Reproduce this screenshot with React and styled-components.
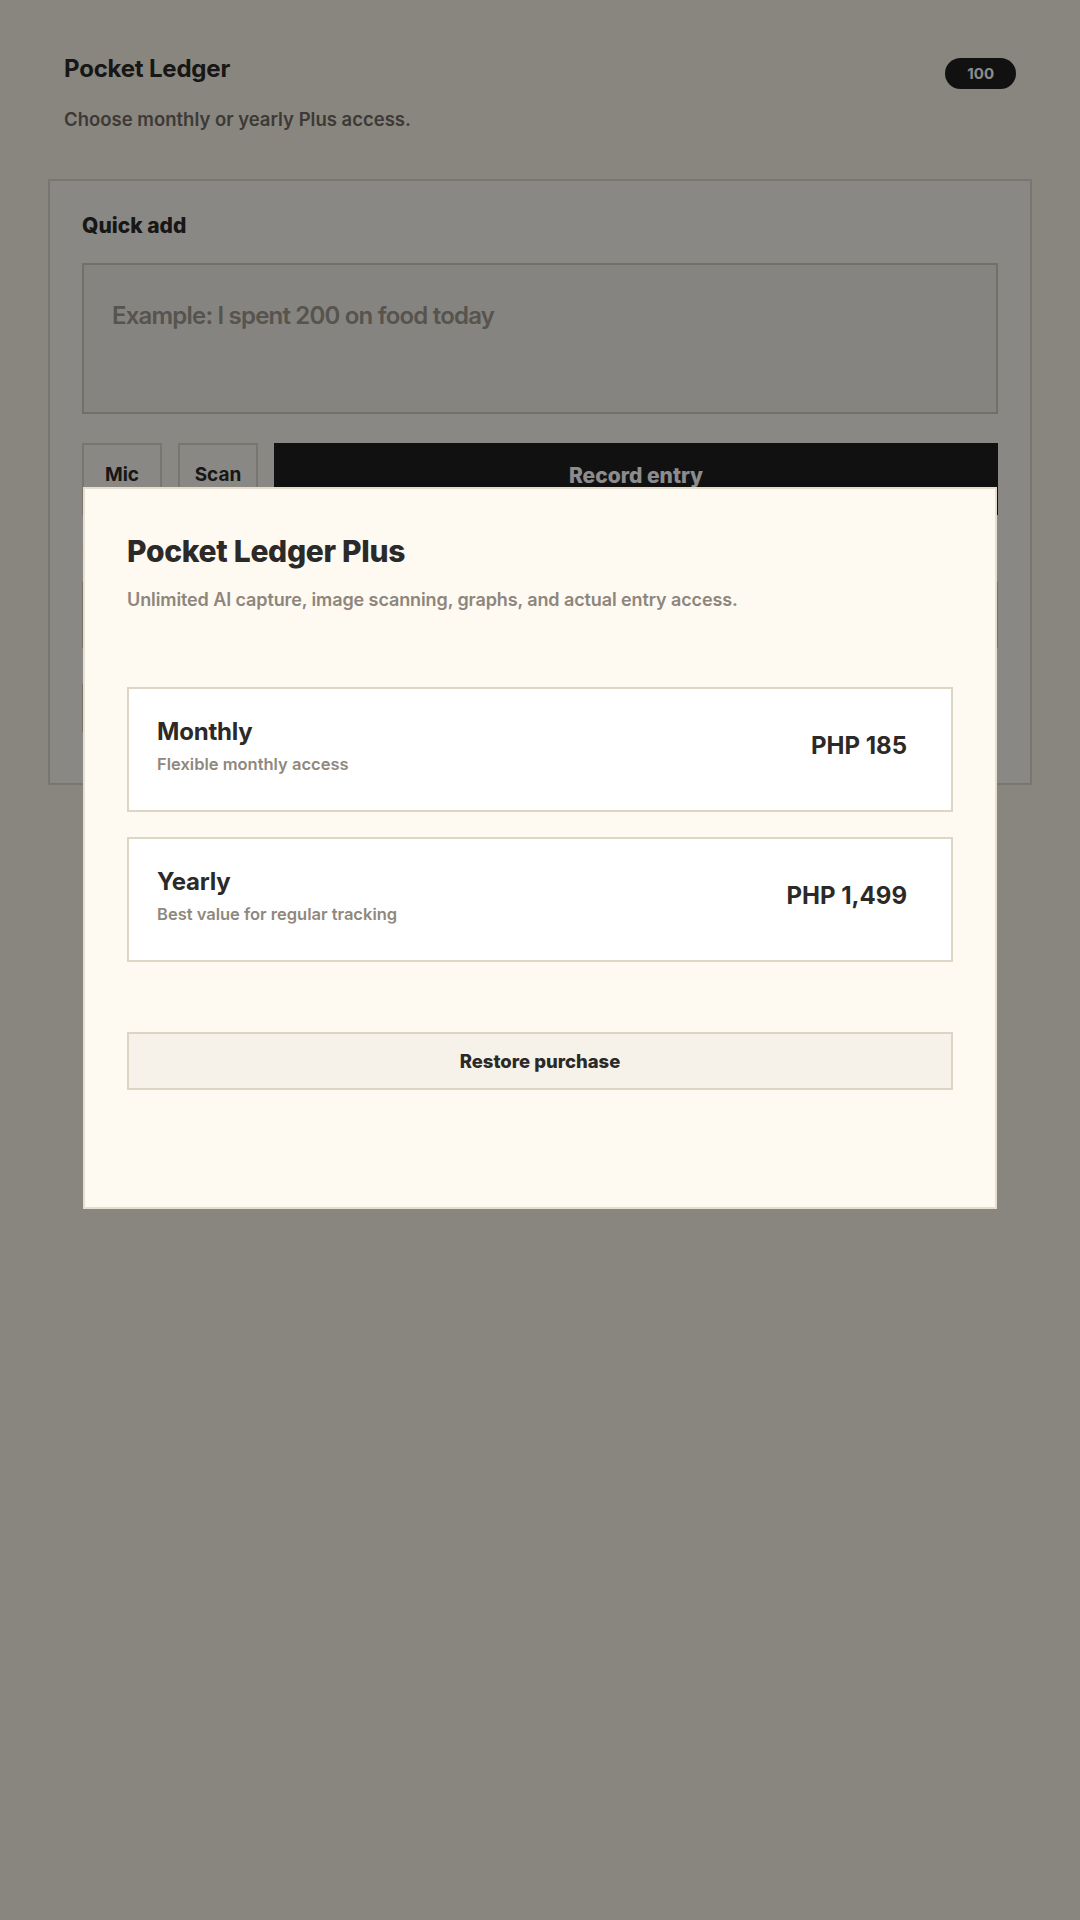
import React, { useState } from 'react';
import styled, { createGlobalStyle } from 'styled-components';

const GlobalStyle = createGlobalStyle`
  html, body {
    margin: 0;
    padding: 0;
    background: #f9f4ea;
    font-family: Inter, "Noto Sans", "Liberation Sans", sans-serif;
    color: #2b2a28;
  }
  * { box-sizing: border-box; }
`;

const Page = styled.div`
  min-height: 1920px;
  padding: 54px 48px 48px;
`;

const Header = styled.header`
  padding: 0 16px;
  margin-bottom: 49px;
`;

const TopRow = styled.div`
  display: flex;
  justify-content: space-between;
  align-items: flex-start;
`;

const AppTitle = styled.h1`
  margin: 0;
  font-size: 24px;
  line-height: 29px;
  font-weight: 700;
  letter-spacing: -0.2px;
`;

const Credits = styled.span`
  margin-top: 4px;
  height: 31px;
  padding: 0 22px;
  border-radius: 16px;
  background: #1f1f1f;
  color: #fff;
  font-size: 15px;
  font-weight: 700;
  display: flex;
  align-items: center;
`;

const Tagline = styled.p`
  margin: 19px 0 0;
  font-size: 18.5px;
  font-weight: 600;
  color: #6f6a63;
`;

const Card = styled.section`
  background: #fbf8f2;
  border: 2px solid #ddd7cc;
  padding: 32px 32px 51px;
`;

const CardTitle = styled.h2`
  margin: 0 0 25px;
  font-size: 21px;
  line-height: 25px;
  font-weight: 800;
`;

const Entry = styled.textarea`
  display: block;
  width: 100%;
  height: 151px;
  resize: none;
  border: 2px solid #d2ccc1;
  background: #f5f1e9;
  padding: 33px 28px;
  font-family: inherit;
  font-size: 24px;
  line-height: 36px;
  font-weight: 600;
  letter-spacing: -0.8px;
  color: #2b2a28;
  outline: none;

  &::placeholder {
    color: #9e978e;
  }
`;

const Actions = styled.div`
  display: flex;
  gap: 16px;
  margin-top: 29px;
`;

const ToolButton = styled.button`
  width: 80px;
  height: 72px;
  padding: 18px 0 0;
  display: flex;
  justify-content: center;
  align-items: flex-start;
  border: 2px solid ${p => (p.$primary ? '#1f1f1f' : '#ddd7cc')};
  background: ${p => (p.$primary ? '#1f1f1f' : '#fbf8f2')};
  color: ${p => (p.$primary ? '#fff' : '#2b2a28')};
  font-family: inherit;
  font-size: ${p => (p.$primary ? '21px' : '19px')};
  font-weight: ${p => (p.$primary ? 800 : 700)};
  flex: ${p => (p.$primary ? '1' : 'none')};
`;

const Hint = styled.p`
  margin: 26px 0 22px;
  font-size: 15px;
  color: #8d867c;
`;

const AmountField = styled.div`
  height: 66px;
  border: 2px solid #d2ccc1;
  background: #f5f1e9;
  display: flex;
  align-items: center;
  padding: 0 24px;
  font-size: 18px;
  color: #aaa49b;
`;

const LinkButton = styled.button`
  margin-top: 36px;
  width: 300px;
  height: 48px;
  border: 2px solid #d2ccc1;
  background: #f5f1e9;
  font-family: inherit;
  font-size: 17px;
  font-weight: 700;
  color: #2b2a28;
`;

/* paywall sheet */

const Backdrop = styled.div`
  position: fixed;
  inset: 0;
  background: rgba(0, 0, 0, 0.45);
  display: flex;
  justify-content: center;
  align-items: flex-start;
  padding-top: 487px;
`;

const Sheet = styled.div`
  width: 914px;
  min-height: 722px;
  background: #fef9f1;
  border: 2px solid #e6decf;
  padding: 45px 42px 42px;
`;

const SheetTitle = styled.h2`
  margin: 0;
  font-size: 30px;
  line-height: 34px;
  font-weight: 800;
  letter-spacing: -0.3px;
  color: #2b2a28;
`;

const SheetText = styled.p`
  margin: 19px 0 0;
  font-size: 18px;
  line-height: 25px;
  font-weight: 600;
  letter-spacing: -0.1px;
  color: #8d867c;
`;

const Plans = styled.div`
  margin-top: 75px;
  display: flex;
  flex-direction: column;
  gap: 25px;
`;

const Plan = styled.button`
  display: flex;
  justify-content: space-between;
  align-items: center;
  width: 100%;
  padding: 28px 44px 36px 28px;
  border: 2px solid ${p => (p.$active ? '#b9ae99' : '#ddd5c6')};
  background: #fff;
  font-family: inherit;
  text-align: left;
  cursor: pointer;
`;

const PlanName = styled.div`
  font-size: 24px;
  line-height: 29px;
  font-weight: 700;
  letter-spacing: -0.2px;
  color: #2b2a28;
`;

const PlanNote = styled.div`
  margin-top: 8px;
  font-size: 16.5px;
  line-height: 20px;
  font-weight: 600;
  color: #8f887e;
`;

const Price = styled.div`
  font-size: 24px;
  line-height: 29px;
  font-weight: 700;
  color: #2b2a28;
`;

const Restore = styled.button`
  margin-top: 70px;
  width: 100%;
  height: 58px;
  border: 2px solid #dcd5c5;
  background: #f6f2ea;
  font-family: inherit;
  font-size: 18.5px;
  font-weight: 800;
  color: #2b2a28;
`;

const plans = [
  { id: 'monthly', name: 'Monthly', note: 'Flexible monthly access', price: 'PHP 185' },
  { id: 'yearly', name: 'Yearly', note: 'Best value for regular tracking', price: 'PHP 1,499' },
];

export default function App() {
  const [text, setText] = useState('');
  const [picked, setPicked] = useState(null);

  return (
    <>
      <GlobalStyle />
      <Page>
        <Header>
          <TopRow>
            <AppTitle>Pocket Ledger</AppTitle>
            <Credits>100</Credits>
          </TopRow>
          <Tagline>Choose monthly or yearly Plus access.</Tagline>
        </Header>

        <Card>
          <CardTitle>Quick add</CardTitle>
          <Entry
            value={text}
            onChange={e => setText(e.target.value)}
            placeholder="Example: I spent 200 on food today"
          />
          <Actions>
            <ToolButton>Mic</ToolButton>
            <ToolButton>Scan</ToolButton>
            <ToolButton $primary>Record entry</ToolButton>
          </Actions>
          <Hint>Free plan includes 3 AI entries per day.</Hint>
          <AmountField>Amount</AmountField>
          <LinkButton>View entries</LinkButton>
        </Card>
      </Page>

      <Backdrop>
        <Sheet>
          <SheetTitle>Pocket Ledger Plus</SheetTitle>
          <SheetText>Unlimited AI capture, image scanning, graphs, and actual entry access.</SheetText>
          <Plans>
            {plans.map(p => (
              <Plan key={p.id} $active={picked === p.id} onClick={() => setPicked(p.id)}>
                <div>
                  <PlanName>{p.name}</PlanName>
                  <PlanNote>{p.note}</PlanNote>
                </div>
                <Price>{p.price}</Price>
              </Plan>
            ))}
          </Plans>
          <Restore>Restore purchase</Restore>
        </Sheet>
      </Backdrop>
    </>
  );
}
